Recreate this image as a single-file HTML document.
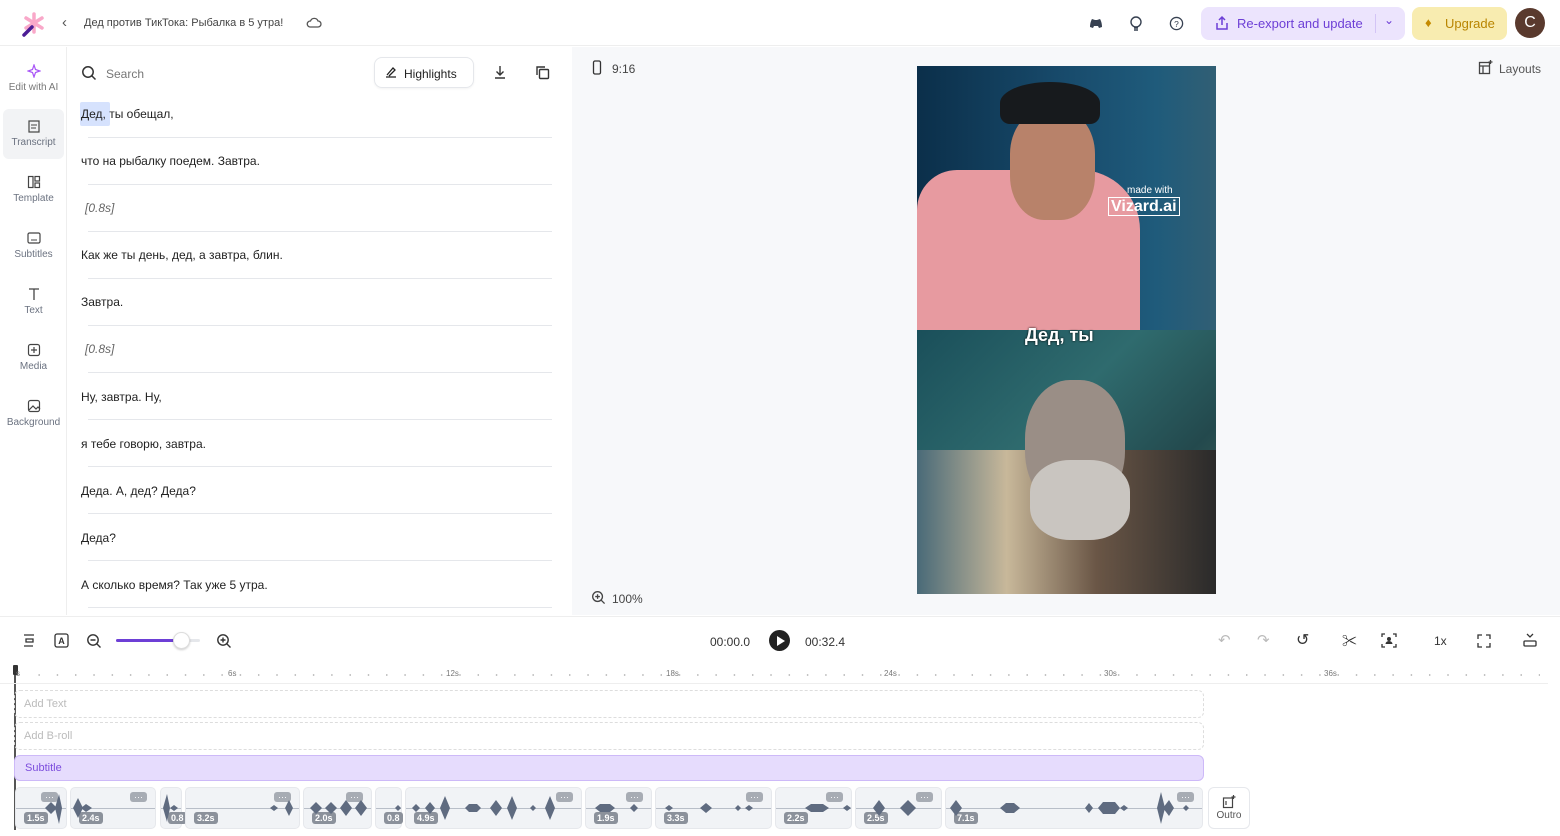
<!DOCTYPE html>
<html><head><meta charset="utf-8"><style>
*{box-sizing:border-box;margin:0;padding:0}
body{width:1560px;height:836px;overflow:hidden;background:#fff;font-family:"Liberation Sans","Noto Sans CJK SC",sans-serif;color:#1f2937;position:relative}
.a{position:absolute}
.top{left:0;top:0;width:1560px;height:46px;border-bottom:1px solid #eee;background:#fff}
.side{left:0;top:47px;width:67px;height:568px;border-right:1px solid #eee}
.si{position:absolute;left:3px;width:61px;height:50px;text-align:center;font-size:10px;color:#6b7280}
.si svg{display:block;margin:10px auto 4px}
.tr{left:67px;top:47px;width:505px;height:568px}
.line{position:absolute;left:81px;width:471px;font-size:12px;color:#222}
.sep{position:absolute;left:88px;width:464px;height:1px;background:#e5e7eb}
.prev{left:572px;top:47px;width:988px;height:568px;background:#f7f8fa}
.tl{left:0;top:616px;width:1560px;height:220px;border-top:1px solid #eee}
.clip{position:absolute;top:787px;height:42px;background:#f1f3f6;border-radius:5px;border:1px solid #e6e8ec}
.lab{position:absolute;bottom:4px;left:8px;background:#8b919b;color:#fff;font-size:9px;font-weight:bold;padding:1px 3px;border-radius:3px}
.dots{position:absolute;top:4px;right:8px;background:#a7acb4;color:#fff;font-size:9px;padding:0 4px;border-radius:3px;line-height:10px}
.wl{position:absolute;left:0;right:0;top:20px;height:1px;background:#b8bec8}
</style></head><body>
<div class="a top">
<svg class="a" style="left:20px;top:11px" width="26" height="26" viewBox="0 0 26 26"><g stroke="#f9a8c9" stroke-width="3.5" stroke-linecap="round"><line x1="14" y1="3" x2="14" y2="21"/><line x1="6" y1="7" x2="22" y2="17"/><line x1="6" y1="17" x2="22" y2="7"/></g><line x1="4" y1="24" x2="12" y2="16" stroke="#4c1d95" stroke-width="3.5" stroke-linecap="round"/></svg>
<div class="a" style="left:62px;top:14px;font-size:15px;color:#555">‹</div>
<div class="a" style="left:84px;top:17px;font-size:11px;color:#444">Дед против ТикТока: Рыбалка в 5 утра!</div>
<svg class="a" style="left:306px;top:16px" width="16" height="14" viewBox="0 0 16 14"><path d="M4 11h8a3 3 0 0 0 0-6 4 4 0 0 0-7.5 0A3 3 0 0 0 4 11z" fill="none" stroke="#555" stroke-width="1.3"/></svg>
<svg class="a" style="left:1088px;top:16px" width="16" height="14" viewBox="0 0 16 14"><path d="M2 11C2 6 4 3 4 3l3 1h2l3-1s2 3 2 8l-3 1-1-2H6l-1 2z" fill="#374151"/></svg>
<svg class="a" style="left:1129px;top:15px" width="14" height="18" viewBox="0 0 14 18"><circle cx="7" cy="7" r="5" fill="none" stroke="#374151" stroke-width="1.4"/><path d="M5 13h4M5 15h4" stroke="#374151" stroke-width="1.4"/></svg>
<svg class="a" style="left:1169px;top:16px" width="15" height="15" viewBox="0 0 16 16"><circle cx="8" cy="8" r="6.5" fill="none" stroke="#374151" stroke-width="1.4"/><text x="8" y="11.5" font-size="9" text-anchor="middle" fill="#374151" font-family="Liberation Sans">?</text></svg>
<div class="a" style="left:1201px;top:7px;width:204px;height:33px;background:#ece4fd;border-radius:8px"></div>
<svg class="a" style="left:1214px;top:15px" width="16" height="16" viewBox="0 0 16 16"><path d="M3 8v6h10V8M8 2v8M5 5l3-3 3 3" fill="none" stroke="#6d3fd6" stroke-width="1.5"/></svg>
<div class="a" style="left:1237px;top:16px;font-size:13px;color:#6d3fd6">Re-export and update</div>
<div class="a" style="left:1375px;top:14px;width:1px;height:19px;background:#d3c4f6"></div>
<div class="a" style="left:1384px;top:13px;font-size:12px;color:#6d3fd6">⌄</div>
<div class="a" style="left:1412px;top:7px;width:95px;height:33px;background:#f8ecb0;border-radius:8px"></div>
<div class="a" style="left:1425px;top:15px;font-size:13px;color:#c58a00">♦</div>
<div class="a" style="left:1445px;top:16px;font-size:13px;color:#b98500">Upgrade</div>
<div class="a" style="left:1515px;top:8px;width:30px;height:30px;border-radius:50%;background:#5a3a2e;color:#fff;font-size:16px;text-align:center;line-height:30px">C</div>
</div>
<div class="a side">
<div class="si" style="top:7px;color:#777"><svg width="14" height="14" viewBox="0 0 14 14"><path d="M7 1L8.5 5.5 13 7 8.5 8.5 7 13 5.5 8.5 1 7 5.5 5.5z" fill="none" stroke="#a855f7" stroke-width="1.2"/></svg>Edit with AI</div>
<div class="si" style="top:62px;background:#f2f3f5;border-radius:6px;height:50px"><svg width="14" height="14" viewBox="0 0 14 14"><rect x="2" y="2" width="10" height="11" fill="none" stroke="#444" stroke-width="1.2"/><path d="M4 6h6M4 9h5" stroke="#444"/></svg>Transcript</div>
<div class="si" style="top:118px"><svg width="14" height="14" viewBox="0 0 14 14"><rect x="1.5" y="1.5" width="4.5" height="11" fill="none" stroke="#444" stroke-width="1.2"/><rect x="8" y="1.5" width="4.5" height="4.5" fill="none" stroke="#444" stroke-width="1.2"/><rect x="8" y="8" width="4.5" height="4.5" fill="none" stroke="#444" stroke-width="1.2"/></svg>Template</div>
<div class="si" style="top:174px"><svg width="14" height="14" viewBox="0 0 14 14"><rect x="1" y="2" width="12" height="10" rx="1.5" fill="none" stroke="#444" stroke-width="1.2"/><path d="M4 9h6" stroke="#444"/></svg>Subtitles</div>
<div class="si" style="top:230px"><svg width="14" height="14" viewBox="0 0 14 14"><path d="M2 2h10M7 2v11" stroke="#444" stroke-width="1.3"/></svg>Text</div>
<div class="si" style="top:286px"><svg width="14" height="14" viewBox="0 0 14 14"><rect x="1.5" y="1.5" width="11" height="11" rx="2" fill="none" stroke="#444" stroke-width="1.2"/><path d="M7 4v6M4 7h6" stroke="#444" stroke-width="1.2"/></svg>Media</div>
<div class="si" style="top:342px"><svg width="14" height="14" viewBox="0 0 14 14"><rect x="1.5" y="1.5" width="11" height="11" rx="2" fill="none" stroke="#444" stroke-width="1.2"/><path d="M2 11l4-4 3 3 2-2 2 2" fill="none" stroke="#444" stroke-width="1.2"/></svg>Background</div>
</div>
<div class="a tr"></div>
<svg class="a" style="left:81px;top:65px" width="16" height="16" viewBox="0 0 16 16"><circle cx="7" cy="7" r="5.2" fill="none" stroke="#333" stroke-width="1.5"/><path d="M11 11l3.5 3.5" stroke="#333" stroke-width="1.5"/></svg>
<div class="a" style="left:106px;top:67px;font-size:12px;color:#777">Search</div>
<div class="a" style="left:374px;top:57px;width:100px;height:31px;border:1px solid #e5e7eb;border-radius:8px;box-shadow:0 1px 2px rgba(0,0,0,.05)"></div>
<svg class="a" style="left:384px;top:65px" width="14" height="14" viewBox="0 0 14 14"><path d="M2 12h10M3 10l6-7 2 2-6 6" fill="none" stroke="#222" stroke-width="1.3"/></svg>
<div class="a" style="left:404px;top:67px;font-size:12px;color:#222">Highlights</div>
<svg class="a" style="left:493px;top:65px" width="14" height="15" viewBox="0 0 14 15"><path d="M7 1v9M3.5 6.5L7 10l3.5-3.5M2 13h10" fill="none" stroke="#333" stroke-width="1.4"/></svg>
<svg class="a" style="left:535px;top:65px" width="15" height="15" viewBox="0 0 15 15"><rect x="4.5" y="4.5" width="9" height="9" rx="1" fill="none" stroke="#333" stroke-width="1.4"/><path d="M2 10V2h8" fill="none" stroke="#333" stroke-width="1.4"/></svg>
<div class="a" style="left:80px;top:102px;width:30px;height:24px;background:#d6e2fd;border-radius:2px"></div>
<div class="line" style="top:107px">Дед, ты обещал,</div><div class="sep" style="top:137px"></div>
<div class="line" style="top:154px">что на рыбалку поедем. Завтра.</div><div class="sep" style="top:184px"></div>
<div class="line" style="top:201px;left:85px;font-style:italic;color:#666">[0.8s]</div><div class="sep" style="top:231px"></div>
<div class="line" style="top:248px">Как же ты день, дед, а завтра, блин.</div><div class="sep" style="top:278px"></div>
<div class="line" style="top:295px">Завтра.</div><div class="sep" style="top:325px"></div>
<div class="line" style="top:342px;left:85px;font-style:italic;color:#666">[0.8s]</div><div class="sep" style="top:372px"></div>
<div class="line" style="top:390px">Ну, завтра. Ну,</div><div class="sep" style="top:419px"></div>
<div class="line" style="top:437px">я тебе говорю, завтра.</div><div class="sep" style="top:466px"></div>
<div class="line" style="top:484px">Деда. А, дед? Деда?</div><div class="sep" style="top:513px"></div>
<div class="line" style="top:531px">Деда?</div><div class="sep" style="top:560px"></div>
<div class="line" style="top:578px">А сколько время? Так уже 5 утра.</div><div class="sep" style="top:607px"></div>
<div class="a prev"></div>
<svg class="a" style="left:592px;top:60px" width="10" height="15" viewBox="0 0 10 15"><rect x="1.5" y="1" width="7" height="13" rx="1.5" fill="none" stroke="#333" stroke-width="1.3"/></svg>
<div class="a" style="left:612px;top:62px;font-size:12px;color:#444">9:16</div>
<svg class="a" style="left:1478px;top:60px" width="15" height="15" viewBox="0 0 15 15"><rect x="1.5" y="2.5" width="10" height="11" fill="none" stroke="#444" stroke-width="1.3"/><path d="M1.5 6h10M5 6v7.5M12.5 0v4M10.5 2h4" stroke="#444" stroke-width="1.3"/></svg>
<div class="a" style="left:1499px;top:62px;font-size:12px;color:#555">Layouts</div>
<svg class="a" style="left:591px;top:590px" width="15" height="15" viewBox="0 0 16 16"><circle cx="7" cy="7" r="5.2" fill="none" stroke="#444" stroke-width="1.4"/><path d="M11 11l3.5 3.5M7 4.5v5M4.5 7h5" stroke="#444" stroke-width="1.4"/></svg>
<div class="a" style="left:612px;top:592px;font-size:12px;color:#444">100%</div>
<div class="a" style="left:917px;top:66px;width:299px;height:264px;background:linear-gradient(90deg,#0b2f4a,#184b6c 50%,#1f5b7b 80%,#315f74)"></div>
<div class="a" style="left:917px;top:170px;width:223px;height:160px;background:#e79aa0;border-radius:40px 60px 0 0"></div>
<div class="a" style="left:1010px;top:110px;width:85px;height:110px;background:#b8826a;border-radius:40%"></div>
<div class="a" style="left:1000px;top:82px;width:100px;height:42px;background:#171a1d;border-radius:50% 50% 10px 10px"></div>
<div class="a" style="left:1127px;top:185px;font-size:10px;color:#fff">made with</div>
<div class="a" style="left:1108px;top:197px;font-size:16px;color:#fff;font-weight:bold;border:1px solid #fff;padding:0 2px;line-height:17px">Vizard.ai</div>
<div class="a" style="left:917px;top:330px;width:299px;height:264px;background:linear-gradient(135deg,#1a4f5a,#2f6b6e 40%,#23494d 70%,#4e6f5f)"></div>
<div class="a" style="left:917px;top:450px;width:299px;height:144px;background:linear-gradient(90deg,#496a78,#c8b89a 30%,#6a5646 60%,#2a2a2a)"></div>
<div class="a" style="left:1025px;top:380px;width:100px;height:130px;background:#9a8e86;border-radius:45%"></div>
<div class="a" style="left:1030px;top:460px;width:100px;height:80px;background:#c9c5c0;border-radius:40%"></div>
<div class="a" style="left:1025px;top:325px;font-size:18px;font-weight:bold;color:#fff;text-shadow:0 0 2px #000">Дед, ты</div>
<div class="a tl"></div>
<svg class="a" style="left:22px;top:633px" width="14" height="16" viewBox="0 0 14 16"><path d="M2 2h10M4 6h7v3H4zM2 13h9" fill="none" stroke="#333" stroke-width="1.3"/></svg>
<svg class="a" style="left:54px;top:633px" width="15" height="15" viewBox="0 0 15 15"><rect x="1" y="1" width="13" height="13" rx="2" fill="none" stroke="#333" stroke-width="1.3"/><text x="7.5" y="11" font-size="9" text-anchor="middle" font-weight="bold" fill="#333" font-family="Liberation Sans">A</text></svg>
<svg class="a" style="left:86px;top:633px" width="16" height="16" viewBox="0 0 16 16"><circle cx="7" cy="7" r="5.2" fill="none" stroke="#333" stroke-width="1.4"/><path d="M11 11l3.5 3.5M4.5 7h5" stroke="#333" stroke-width="1.4"/></svg>
<div class="a" style="left:116px;top:639px;width:84px;height:3px;background:#e5e7eb;border-radius:2px"></div>
<div class="a" style="left:116px;top:639px;width:66px;height:3px;background:#6d3fd6;border-radius:2px"></div>
<div class="a" style="left:173px;top:632px;width:17px;height:17px;background:#fff;border:1px solid #ddd;border-radius:50%;box-shadow:0 1px 2px rgba(0,0,0,.2)"></div>
<svg class="a" style="left:216px;top:633px" width="16" height="16" viewBox="0 0 16 16"><circle cx="7" cy="7" r="5.2" fill="none" stroke="#333" stroke-width="1.4"/><path d="M11 11l3.5 3.5M4.5 7h5M7 4.5v5" stroke="#333" stroke-width="1.4"/></svg>
<div class="a" style="left:710px;top:635px;font-size:12px;color:#333">00:00.0</div>
<div class="a" style="left:769px;top:630px;width:21px;height:21px;border-radius:50%;background:#222"></div>
<div class="a" style="left:777px;top:636px;width:0;height:0;border-left:8px solid #fff;border-top:5px solid transparent;border-bottom:5px solid transparent"></div>
<div class="a" style="left:805px;top:635px;font-size:12px;color:#333">00:32.4</div>
<div class="a" style="left:1218px;top:631px;font-size:15px;color:#bbb">↶</div>
<div class="a" style="left:1257px;top:631px;font-size:15px;color:#bbb">↷</div>
<div class="a" style="left:1296px;top:630px;font-size:16px;color:#333">↺</div>
<div class="a" style="left:1342px;top:630px;font-size:15px;color:#333">✂</div>
<svg class="a" style="left:1381px;top:633px" width="16" height="15" viewBox="0 0 16 15"><path d="M1 4V1h3M12 1h3v3M15 11v3h-3M4 14H1v-3" fill="none" stroke="#333" stroke-width="1.3"/><circle cx="8" cy="6" r="2" fill="#333"/><path d="M4.5 11a3.5 3 0 0 1 7 0z" fill="#333"/></svg>
<div class="a" style="left:1434px;top:634px;font-size:12px;color:#333">1x</div>
<svg class="a" style="left:1477px;top:634px" width="14" height="14" viewBox="0 0 14 14"><path d="M1 5V1h4M9 1h4v4M13 9v4H9M5 13H1V9" fill="none" stroke="#333" stroke-width="1.3"/></svg>
<svg class="a" style="left:1522px;top:632px" width="16" height="16" viewBox="0 0 16 16"><path d="M5 2l3 3 3-3" fill="none" stroke="#333" stroke-width="1.3"/><rect x="2" y="9" width="12" height="5" rx="1" fill="none" stroke="#333" stroke-width="1.3"/></svg>
<div class="a" style="left:14px;top:666px;width:2px;height:164px;background:#555"></div>
<div class="a" style="left:13px;top:665px;width:5px;height:10px;background:#333;border-radius:1px"></div>
<div class="a" style="left:0;top:683px;width:1548px;height:1px;background:#eee"></div>
<div class="a" style="left:16px;top:669px;width:1530px;font-size:8px;color:#777;letter-spacing:0">
<span class="a" style="left:0">s</span><span class="a" style="left:212px">6s</span><span class="a" style="left:430px">12s</span><span class="a" style="left:650px">18s</span><span class="a" style="left:868px">24s</span><span class="a" style="left:1088px">30s</span><span class="a" style="left:1308px">36s</span></div>
<div class="a" style="left:30px;top:674px;width:1510px;height:2px;background:radial-gradient(circle,#bbb 0.8px,transparent 1px) 0 0/18.3px 2px"></div>
<div class="a" style="left:14px;top:690px;width:1190px;height:28px;border:1px dashed #ddd;border-radius:6px"></div>
<div class="a" style="left:24px;top:698px;font-size:11px;color:#bbb">Add Text</div>
<div class="a" style="left:14px;top:722px;width:1190px;height:28px;border:1px dashed #ddd;border-radius:6px"></div>
<div class="a" style="left:24px;top:730px;font-size:11px;color:#bbb">Add B-roll</div>
<div class="a" style="left:14px;top:755px;width:1190px;height:26px;background:#e6dcfd;border:1px solid #cdb9f8;border-radius:6px"></div>
<div class="a" style="left:25px;top:762px;font-size:11px;color:#7c4ddd">Subtitle</div>
<div class="clip" style="left:15px;width:52px"><div class="wl"></div><div class="dots">···</div><div class="lab">1.5s</div></div>
<div class="clip" style="left:70px;width:86px"><div class="wl"></div><div class="dots">···</div><div class="lab">2.4s</div></div>
<div class="clip" style="left:160px;width:22px"><div class="wl"></div><div class="lab" style="left:7px">0.8</div></div>
<div class="clip" style="left:185px;width:115px"><div class="wl"></div><div class="dots">···</div><div class="lab">3.2s</div></div>
<div class="clip" style="left:303px;width:69px"><div class="wl"></div><div class="dots">···</div><div class="lab">2.0s</div></div>
<div class="clip" style="left:375px;width:27px"><div class="wl"></div><div class="lab">0.8</div></div>
<div class="clip" style="left:405px;width:177px"><div class="wl"></div><div class="dots">···</div><div class="lab">4.9s</div></div>
<div class="clip" style="left:585px;width:67px"><div class="wl"></div><div class="dots">···</div><div class="lab">1.9s</div></div>
<div class="clip" style="left:655px;width:117px"><div class="wl"></div><div class="dots">···</div><div class="lab">3.3s</div></div>
<div class="clip" style="left:775px;width:77px"><div class="wl"></div><div class="dots">···</div><div class="lab">2.2s</div></div>
<div class="clip" style="left:855px;width:87px"><div class="wl"></div><div class="dots">···</div><div class="lab">2.5s</div></div>
<div class="clip" style="left:945px;width:258px"><div class="wl"></div><div class="dots">···</div><div class="lab">7.1s</div></div>
<svg class="a" style="left:15px;top:790px" width="1190" height="40" viewBox="0 0 1190 40"><g fill="#5f6b80">
<path d="M30 18l6-6 6 6-6 6zM40 18l4-14 3 14-3 16z"/><path d="M58 18l5-10 5 10-5 10zM66 18l5-4 6 4-6 4z"/><path d="M148 18l4-14 3 14-3 14zM155 18l4-3 4 3-4 3z"/><path d="M255 18l4-3 4 3-4 3zM270 18l4-8 4 8-4 8z"/>
<path d="M295 18l6-6 6 6-6 6zM310 18l6-6 6 6-6 6zM325 18l6-8 6 8-6 8zM340 18l6-8 6 8-6 8z"/><path d="M380 18l3-3 3 3-3 3z"/><path d="M397 18l4-4 4 4-4 4zM410 18l5-6 5 6-5 6zM425 18l5-12 5 12-5 12zM450 18l4-4 8 0 4 4-4 4-8 0zM475 18l6-8 6 8-6 8zM492 18l5-12 5 12-5 12zM515 18l3-3 3 3-3 3zM530 18l5-12 5 12-5 12z"/>
<path d="M580 18l5-4 10 0 5 4-5 4-10 0zM615 18l4-4 4 4-4 4z"/><path d="M650 18l4-3 4 3-4 3zM685 18l6-5 6 5-6 5zM720 18l3-3 3 3-3 3zM730 18l4-3 4 3-4 3z"/><path d="M790 18l6-4 12 0 6 4-6 4-12 0zM828 18l4-3 4 3-4 3z"/><path d="M858 18l6-8 6 8-6 8zM885 18l8-8 8 8-8 8z"/>
<path d="M935 18l6-8 6 8-6 8zM985 18l6-5 8 0 6 5-6 5-8 0zM1070 18l4-5 4 5-4 5zM1083 18l5-6 12 0 5 6-5 6-12 0zM1105 18l4-3 4 3-4 3zM1142 18l4-16 4 16-4 16zM1148 18l6-8 5 8-5 8zM1168 18l3-3 3 3-3 3z"/></g></svg>
<div class="a" style="left:1208px;top:787px;width:42px;height:42px;border:1px solid #e6e8ec;border-radius:6px;text-align:center;font-size:10px;color:#555"><svg width="14" height="14" viewBox="0 0 14 14" style="display:block;margin:7px auto 1px"><rect x="1.5" y="3" width="9" height="9.5" fill="none" stroke="#444" stroke-width="1.2"/><path d="M11.5 0v4M9.5 2h4M4 6v4" stroke="#444" stroke-width="1.2"/></svg>Outro</div>
</body></html>
